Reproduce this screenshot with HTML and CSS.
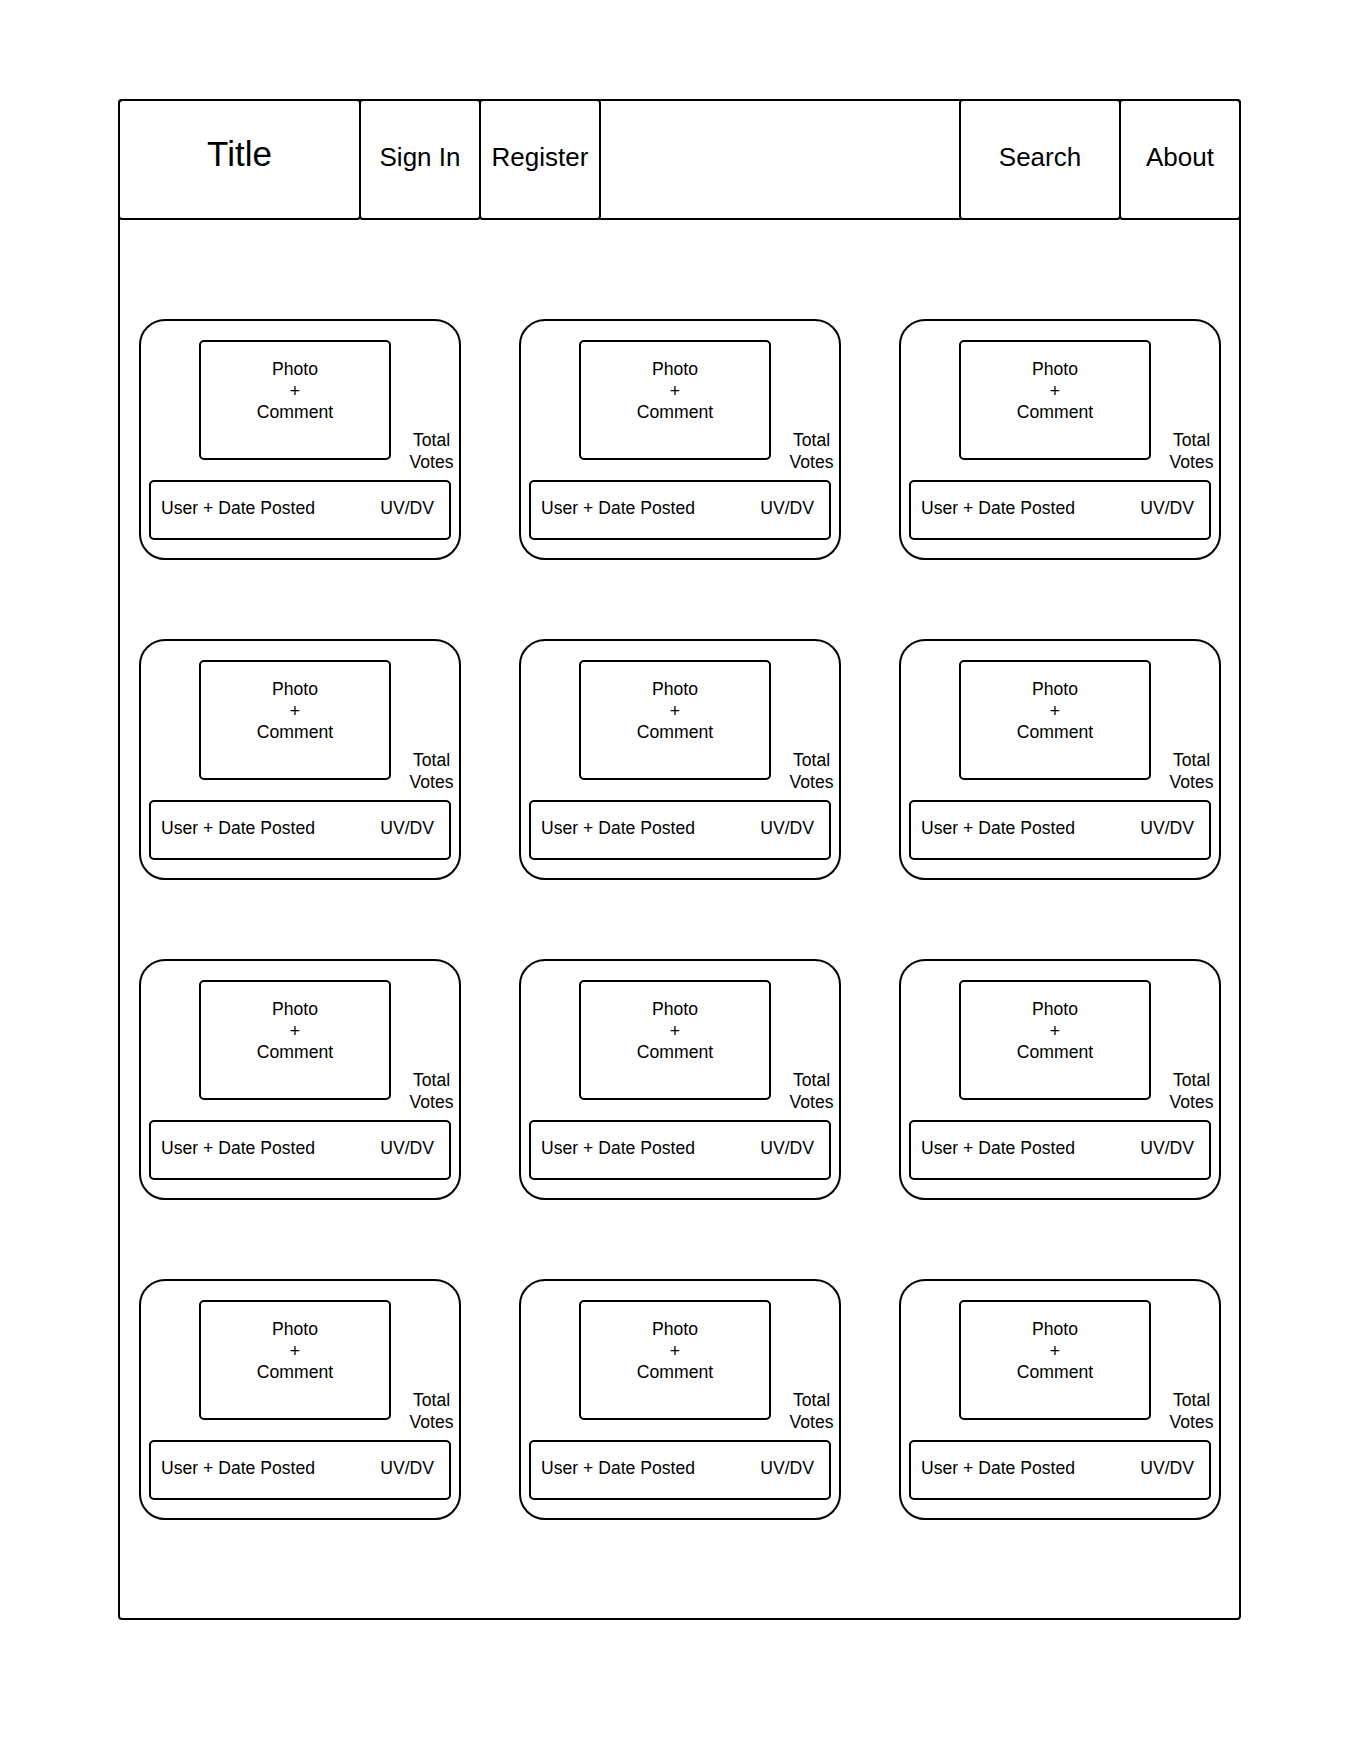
FILE: index.html
```html
<!DOCTYPE html>
<html>
<head>
    <meta http-equiv="Content-Type" content="text/html; charset=utf-8">
    <title>Photo Board Wireframe</title>
    <link rel="stylesheet" href="styles.css">
</head>
<body>
    <div class="page">
        <div class="frame">
            <div class="topbar">
                <div class="nav-box title-box">Title</div>
                <div class="nav-box signin-box">Sign In</div>
                <div class="nav-box register-box">Register</div>
                <div class="nav-spacer"></div>
                <div class="nav-box search-box">Search</div>
                <div class="nav-box about-box">About</div>
            </div>

            <div class="board">
                <div class="post-card">
                    <div class="post-top">
                        <div class="photo-box">Photo<br>+<br>Comment</div>
                        <div class="total-votes">Total<br>Votes</div>
                    </div>
                    <div class="post-meta"><span>User + Date Posted</span><span>UV/DV</span></div>
                </div>
                <div class="post-card">
                    <div class="post-top">
                        <div class="photo-box">Photo<br>+<br>Comment</div>
                        <div class="total-votes">Total<br>Votes</div>
                    </div>
                    <div class="post-meta"><span>User + Date Posted</span><span>UV/DV</span></div>
                </div>
                <div class="post-card">
                    <div class="post-top">
                        <div class="photo-box">Photo<br>+<br>Comment</div>
                        <div class="total-votes">Total<br>Votes</div>
                    </div>
                    <div class="post-meta"><span>User + Date Posted</span><span>UV/DV</span></div>
                </div>

                <div class="post-card">
                    <div class="post-top">
                        <div class="photo-box">Photo<br>+<br>Comment</div>
                        <div class="total-votes">Total<br>Votes</div>
                    </div>
                    <div class="post-meta"><span>User + Date Posted</span><span>UV/DV</span></div>
                </div>
                <div class="post-card">
                    <div class="post-top">
                        <div class="photo-box">Photo<br>+<br>Comment</div>
                        <div class="total-votes">Total<br>Votes</div>
                    </div>
                    <div class="post-meta"><span>User + Date Posted</span><span>UV/DV</span></div>
                </div>
                <div class="post-card">
                    <div class="post-top">
                        <div class="photo-box">Photo<br>+<br>Comment</div>
                        <div class="total-votes">Total<br>Votes</div>
                    </div>
                    <div class="post-meta"><span>User + Date Posted</span><span>UV/DV</span></div>
                </div>

                <div class="post-card">
                    <div class="post-top">
                        <div class="photo-box">Photo<br>+<br>Comment</div>
                        <div class="total-votes">Total<br>Votes</div>
                    </div>
                    <div class="post-meta"><span>User + Date Posted</span><span>UV/DV</span></div>
                </div>
                <div class="post-card">
                    <div class="post-top">
                        <div class="photo-box">Photo<br>+<br>Comment</div>
                        <div class="total-votes">Total<br>Votes</div>
                    </div>
                    <div class="post-meta"><span>User + Date Posted</span><span>UV/DV</span></div>
                </div>
                <div class="post-card">
                    <div class="post-top">
                        <div class="photo-box">Photo<br>+<br>Comment</div>
                        <div class="total-votes">Total<br>Votes</div>
                    </div>
                    <div class="post-meta"><span>User + Date Posted</span><span>UV/DV</span></div>
                </div>

                <div class="post-card">
                    <div class="post-top">
                        <div class="photo-box">Photo<br>+<br>Comment</div>
                        <div class="total-votes">Total<br>Votes</div>
                    </div>
                    <div class="post-meta"><span>User + Date Posted</span><span>UV/DV</span></div>
                </div>
                <div class="post-card">
                    <div class="post-top">
                        <div class="photo-box">Photo<br>+<br>Comment</div>
                        <div class="total-votes">Total<br>Votes</div>
                    </div>
                    <div class="post-meta"><span>User + Date Posted</span><span>UV/DV</span></div>
                </div>
                <div class="post-card">
                    <div class="post-top">
                        <div class="photo-box">Photo<br>+<br>Comment</div>
                        <div class="total-votes">Total<br>Votes</div>
                    </div>
                    <div class="post-meta"><span>User + Date Posted</span><span>UV/DV</span></div>
                </div>
            </div>
        </div>
    </div>
</body>
</html>
```

FILE: styles.css
```css
* {
    box-sizing: border-box;
}

body, html {
    margin: 0;
    background: #fff;
    color: #000;
    font-family: "Liberation Sans", Arial, sans-serif;
}

.page {
    padding: 99px 0 0 118px;
}

/* outer wireframe */
.frame {
    width: 1123px;
    border: 2px solid #000;
    border-radius: 4px;
}

.topbar {
    display: flex;
    height: 121px;
    margin: -2px -2px 0 -2px;
}

.nav-box {
    height: 121px;
    border: 2px solid #000;
    border-radius: 4px;
    display: flex;
    justify-content: center;
    align-items: center;
    font-size: 26px;
    line-height: 1.2;
    padding-bottom: 3px;
    margin-left: -2px;
}

.title-box {
    width: 243px;
    margin-left: 0;
    font-size: 35px;
    padding-bottom: 12px;
}

.signin-box,
.register-box {
    width: 122px;
}

.search-box {
    width: 162px;
}

.about-box {
    width: 122px;
}

.nav-spacer {
    flex: 1;
    margin-left: -2px;
    border-bottom: 2px solid #000;
}

/* cards */
.board {
    display: grid;
    grid-template-columns: repeat(3, 322px);
    column-gap: 58px;
    row-gap: 79px;
    padding: 99px 0 98px 19px;
}

.post-card {
    height: 241px;
    border: 2px solid #000;
    border-radius: 26px;
    padding: 19px 8px 18px 8px;
    font-size: 17.6px;
    line-height: 21.5px;
}

.post-top {
    display: flex;
    height: 140px;
}

.photo-box {
    width: 192px;
    height: 120px;
    margin-left: 50px;
    padding-top: 17px;
    border: 2px solid #000;
    border-radius: 5px;
    text-align: center;
}

.total-votes {
    flex: 1;
    align-self: flex-end;
    margin: 0 -8px 7px 0;
    padding-left: 13px;
    text-align: center;
}

.post-meta {
    height: 60px;
    border: 2px solid #000;
    border-radius: 5px;
    display: flex;
    justify-content: space-between;
    align-items: center;
    padding: 0 15px 3px 10px;
}
```
